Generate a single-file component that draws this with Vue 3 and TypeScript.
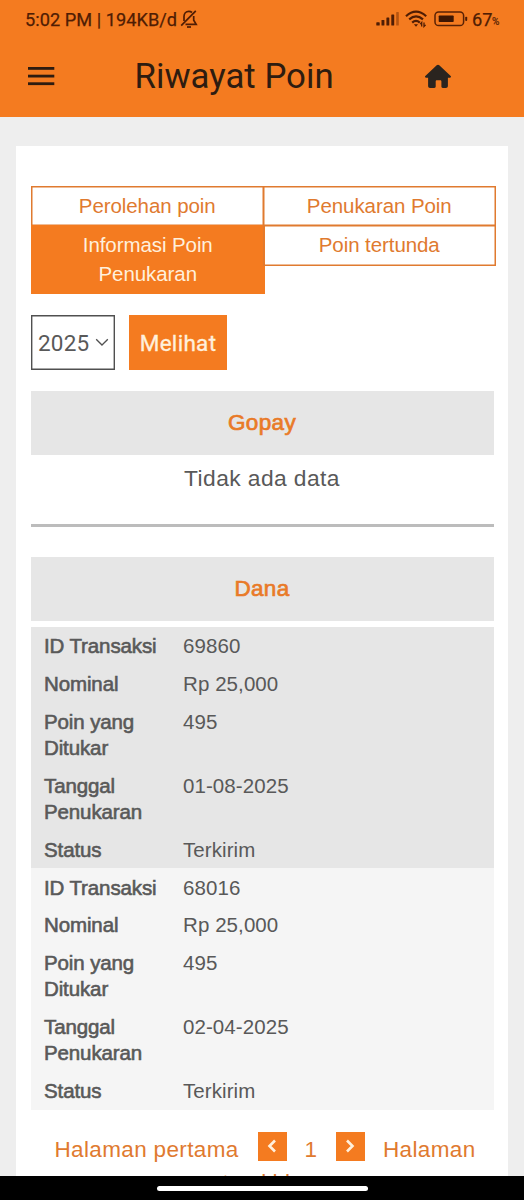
<script setup lang="ts">
interface Row {
  label: string[]
  key: string
  value: string
}
interface Tab {
  lines: string[]
  active: boolean
}

const tabs: Tab[] = [
  { lines: ['Perolehan poin'], active: false },
  { lines: ['Penukaran Poin'], active: false },
  { lines: ['Informasi Poin', 'Penukaran'], active: true },
  { lines: ['Poin tertunda'], active: false },
]

function makeRows(id: string, date: string): Row[] {
  return [
    { key: 'id', label: ['ID Transaksi'], value: id },
    { key: 'nominal', label: ['Nominal'], value: 'Rp 25,000' },
    { key: 'points', label: ['Poin yang', 'Ditukar'], value: '495' },
    { key: 'date', label: ['Tanggal', 'Penukaran'], value: date },
    { key: 'state', label: ['Status'], value: 'Terkirim' },
  ]
}

const transactions: Row[][] = [
  makeRows('69860', '01-08-2025'),
  makeRows('68016', '02-04-2025'),
]
</script>

<template>
  <div class="screen">
    <header class="top">
      <div class="status">
        <span class="clock">5:02 PM | 194KB/d</span>
        <svg class="bell" width="18" height="20" viewBox="0 0 18 20" fill="none" stroke="#4f1d04" stroke-width="1.7">
          <path d="M15.8 1.800 1.200 16.600" />
          <path d="M4 12V7.5C4 4.500 6 2.400 8.800 2.400c1.300 0 2.400.4 3.200 1.100M13.700 7v4.200l2.500 4.200H5.500" />
          <path d="M7 18h4" />
        </svg>
        <svg class="signal" width="24" height="16" viewBox="0 0 24 16" fill="#4f1d04">
          <rect x="0.300" y="11.300" width="3.400" height="3.200" rx="0.600" />
          <rect x="5.500" y="9" width="2.900" height="5.500" rx="0.600" />
          <rect x="10.400" y="6.500" width="2.900" height="8" rx="0.600" />
          <rect x="15.300" y="3.500" width="2.900" height="11" rx="0.600" />
          <rect x="20.200" y="1" width="2.600" height="13.500" rx="0.600" fill="#b55410" />
        </svg>
        <svg class="wifi" width="23" height="18" viewBox="0 0 23 18" fill="none" stroke="#4f1d04" stroke-width="2.200">
          <path d="M1 6.200Q11 -2.800 21.200 6.200" />
          <path d="M4.200 9.400Q11 3.200 18 9.400" />
          <path d="M7.200 12.600Q11 9 14.800 12.600" />
          <path d="M8.900 14.200h4.200L11 16.700z" fill="#4f1d04" stroke="none" />
          <path d="M16.700 16.500v-4l-1.500 1.600M19 12.500v4l1.600-1.600" stroke-width="1.300" />
        </svg>
        <svg class="battery" width="34" height="16" viewBox="0 0 34 16">
          <rect x="1" y="1" width="28.600" height="13.500" rx="3.600" fill="none" stroke="#5a2205" stroke-width="1.500" />
          <rect x="4.700" y="4.500" width="15" height="6.600" rx="0.800" fill="#3d1603" />
          <rect x="31.200" y="5.700" width="2" height="4.300" rx="0.900" fill="#4f1d04" />
        </svg>
        <span class="level">67</span><span class="percent">%</span>
      </div>
      <div class="bar">
        <svg class="menu" width="27" height="19" viewBox="0 0 27 19" fill="#2e1c10">
          <rect width="26.300" height="2.800" />
          <rect y="7.700" width="26.300" height="2.800" />
          <rect y="15.300" width="26.300" height="2.800" />
        </svg>
        <h1>Riwayat Poin</h1>
        <svg class="home" width="28" height="25" viewBox="0 0 28 25" fill="#2a241f">
          <path d="M14 .8c.5 0 .9.2 1.300.5L26.700 12c.7.7.2 1.700-.8 1.700h-2V22c0 1.200-.9 2-2 2h-3.100c-.9 0-1.400-.5-1.400-1.400v-5.200c0-.8-.4-1.200-1.200-1.200h-3.300c-.8 0-1.200.4-1.200 1.200v5.200c0 .9-.5 1.400-1.400 1.400H6c-1.100 0-1.900-.8-1.900-2v-8.300h-2c-1 0-1.500-1-.8-1.700L12.700 1.300c.4-.3.800-.5 1.300-.5z" />
        </svg>
      </div>
    </header>

    <main class="card">
      <nav class="tabs">
        <div v-for="tab in tabs" :key="tab.lines[0]" class="tab" :class="{ active: tab.active }">
          <span v-for="line in tab.lines" :key="line">{{ line }}</span>
        </div>
      </nav>

      <div class="filter">
        <div class="select">
          <span>2025</span>
          <svg width="14" height="9" viewBox="0 0 14 9" fill="none" stroke="#505050" stroke-width="1.300">
            <path d="M1.200 1.200 7 7l5.800-5.800" />
          </svg>
        </div>
        <button class="submit">Melihat</button>
      </div>

      <h2>Gopay</h2>
      <p class="empty">Tidak ada data</p>
      <div class="rule"></div>
      <h2>Dana</h2>

      <div class="list">
        <section v-for="(rows, i) in transactions" :key="i" class="item">
          <div v-for="row in rows" :key="row.key" class="row">
            <div class="label">
              <span v-for="part in row.label" :key="part">{{ part }}</span>
            </div>
            <div class="value">{{ row.value }}</div>
          </div>
        </section>
      </div>

      <div class="pager">
        <span class="first">Halaman pertama</span>
        <span class="arrow prev">
          <svg width="10" height="14" viewBox="0 0 10 14" fill="none" stroke="#fff0dc" stroke-width="2.600"><path d="M8 1.500 2.500 7 8 12.500" /></svg>
        </span>
        <span class="page">1</span>
        <span class="arrow next">
          <svg width="10" height="14" viewBox="0 0 10 14" fill="none" stroke="#fff0dc" stroke-width="2.600"><path d="M2 1.500 7.500 7 2 12.500" /></svg>
        </span>
        <span class="last">Halaman</span>
      </div>
      <div class="pager-wrap">terakhir</div>
    </main>

    <footer class="gesture"><span></span></footer>
  </div>
</template>

<style>
body {
  margin: 0;
}
</style>

<style scoped>
* {
  box-sizing: border-box;
}
.screen {
  width: 524px;
  height: 1200px;
  overflow: hidden;
  display: flex;
  flex-direction: column;
  background: #eee;
  color: #595959;
  font-family: 'Liberation Sans', Arial, sans-serif;
}
svg {
  display: block;
  flex: none;
}
.top {
  height: 117px;
  flex: none;
  background: #f47b20;
  font-family: Roboto, sans-serif;
}
.status {
  height: 38px;
  padding-left: 25px;
  display: flex;
  align-items: center;
  color: #4f1d04;
  white-space: nowrap;
}
.clock {
  width: 152px;
  font-size: 18.2px;
  letter-spacing: 0.03px;
  -webkit-text-stroke: 0.250px #4f1d04;
}
.bell {
  margin-left: 3px;
}
.signal {
  margin-left: 178px;
}
.wifi {
  margin-left: 5px;
}
.battery {
  margin-left: 6px;
}
.level {
  width: 20px;
  margin-left: 4px;
  font-size: 18.200px;
  -webkit-text-stroke: 0.250px #4f1d04;
}
.percent {
  padding-top: 5px;
  font-size: 10px;
  -webkit-text-stroke: 0.200px #4f1d04;
}
.bar {
  height: 77px;
  display: flex;
  align-items: center;
}
.menu {
  margin-left: 27.500px;
}
h1 {
  width: 200px;
  margin: 0 0 2px 80px;
  font-size: 34.800px;
  font-weight: 400;
  color: #2e1c10;
  white-space: nowrap;
}
.home {
  margin-left: 89.800px;
}
.card {
  width: 492px;
  height: 1030px;
  flex: none;
  margin: 29px 0 0 16px;
  padding: 39.600px 15px 0 14.500px;
  background: #fff;
  overflow: hidden;
}
.tabs {
  width: 466px;
  height: 109px;
  display: grid;
  grid-template-columns: 232px 232px;
  grid-template-rows: 39.300px 69px;
  align-items: start;
}
.tab {
  width: 233.500px;
  height: 40.700px;
  padding: 5.500px 0;
  box-shadow: inset 0 0 0 1.500px #e07a2f;
  color: #e07a2f;
  font-size: 20.500px;
  line-height: 29px;
  letter-spacing: -0.080px;
  text-align: center;
}
.tab span {
  display: block;
}
.tab.active {
  width: 234.500px;
  height: 69.500px;
  background: #f47b20;
  box-shadow: none;
  color: #fff0dc;
}
.filter {
  display: flex;
  margin-top: 20.900px;
  height: 55px;
  gap: 14.500px;
}
.select {
  width: 84px;
  box-shadow: inset 0 0 0 1.400px #505050;
  padding-left: 7.500px;
  display: flex;
  align-items: center;
  gap: 6px;
  font-family: Roboto, sans-serif;
  font-size: 22.500px;
  letter-spacing: 0.200px;
}
.submit {
  width: 98px;
  padding: 0;
  border: 0;
  background: #f47b20;
  color: #fff0dc;
  font: 400 22.500px Roboto, sans-serif;
  letter-spacing: 0.300px;
  -webkit-text-stroke: 0.350px #fff0dc;
}
h2 {
  width: 463px;
  height: 64px;
  margin: 20.600px 0 0;
  background: #e6e6e6;
  color: #e97a28;
  font-size: 22.500px;
  font-weight: 400;
  line-height: 64px;
  letter-spacing: 0.350px;
  text-align: center;
  -webkit-text-stroke: 0.700px #e97a28;
}
.empty {
  width: 463px;
  height: 69px;
  margin: 0;
  padding-top: 9px;
  font-size: 22.800px;
  line-height: 29px;
  letter-spacing: 0.420px;
  text-align: center;
}
.rule {
  width: 463px;
  height: 3px;
  margin: 0 0 30px;
  background: #bcbcbc;
}
.rule + h2 {
  margin-top: 0;
}
.list {
  width: 463px;
  margin-top: 6px;
}
.item {
  height: 241px;
  background: #e6e6e6;
}
.item + .item {
  height: 241.500px;
  padding-top: 0.500px;
  background: #f5f5f5;
}
.row {
  display: flex;
  padding: 6px 0 5.800px 13.500px;
  font-size: 20.500px;
  line-height: 26.100px;
}
.label {
  width: 139px;
  letter-spacing: -0.120px;
  -webkit-text-stroke: 0.600px #595959;
}
.value {
  letter-spacing: 0.080px;
}
.label span {
  display: block;
}
.pager {
  height: 30px;
  margin-top: 22px;
  display: flex;
  font-size: 22.500px;
  line-height: 35px;
  letter-spacing: 0.350px;
  color: #e07a2f;
  white-space: nowrap;
}
.first {
  width: 204px;
  padding-left: 24px;
}
.arrow {
  width: 29px;
  height: 29px;
  margin-left: 23px;
  display: flex;
  align-items: center;
  justify-content: center;
  background: #f47b20;
}
.page {
  width: 49px;
  text-align: center;
}
.next {
  margin-left: 0;
}
.last {
  margin-left: 18.500px;
}
.pager-wrap {
  width: 463px;
  margin-top: 7.500px;
  padding-right: 4px;
  font-size: 22.500px;
  line-height: 28px;
  text-align: center;
  color: #e07a2f;
}
.gesture {
  height: 24px;
  flex: none;
  display: flex;
  justify-content: center;
  padding-top: 10px;
  background: #000;
}
.gesture span {
  width: 211px;
  height: 5px;
  border-radius: 3px;
  background: #fff;
}
</style>
